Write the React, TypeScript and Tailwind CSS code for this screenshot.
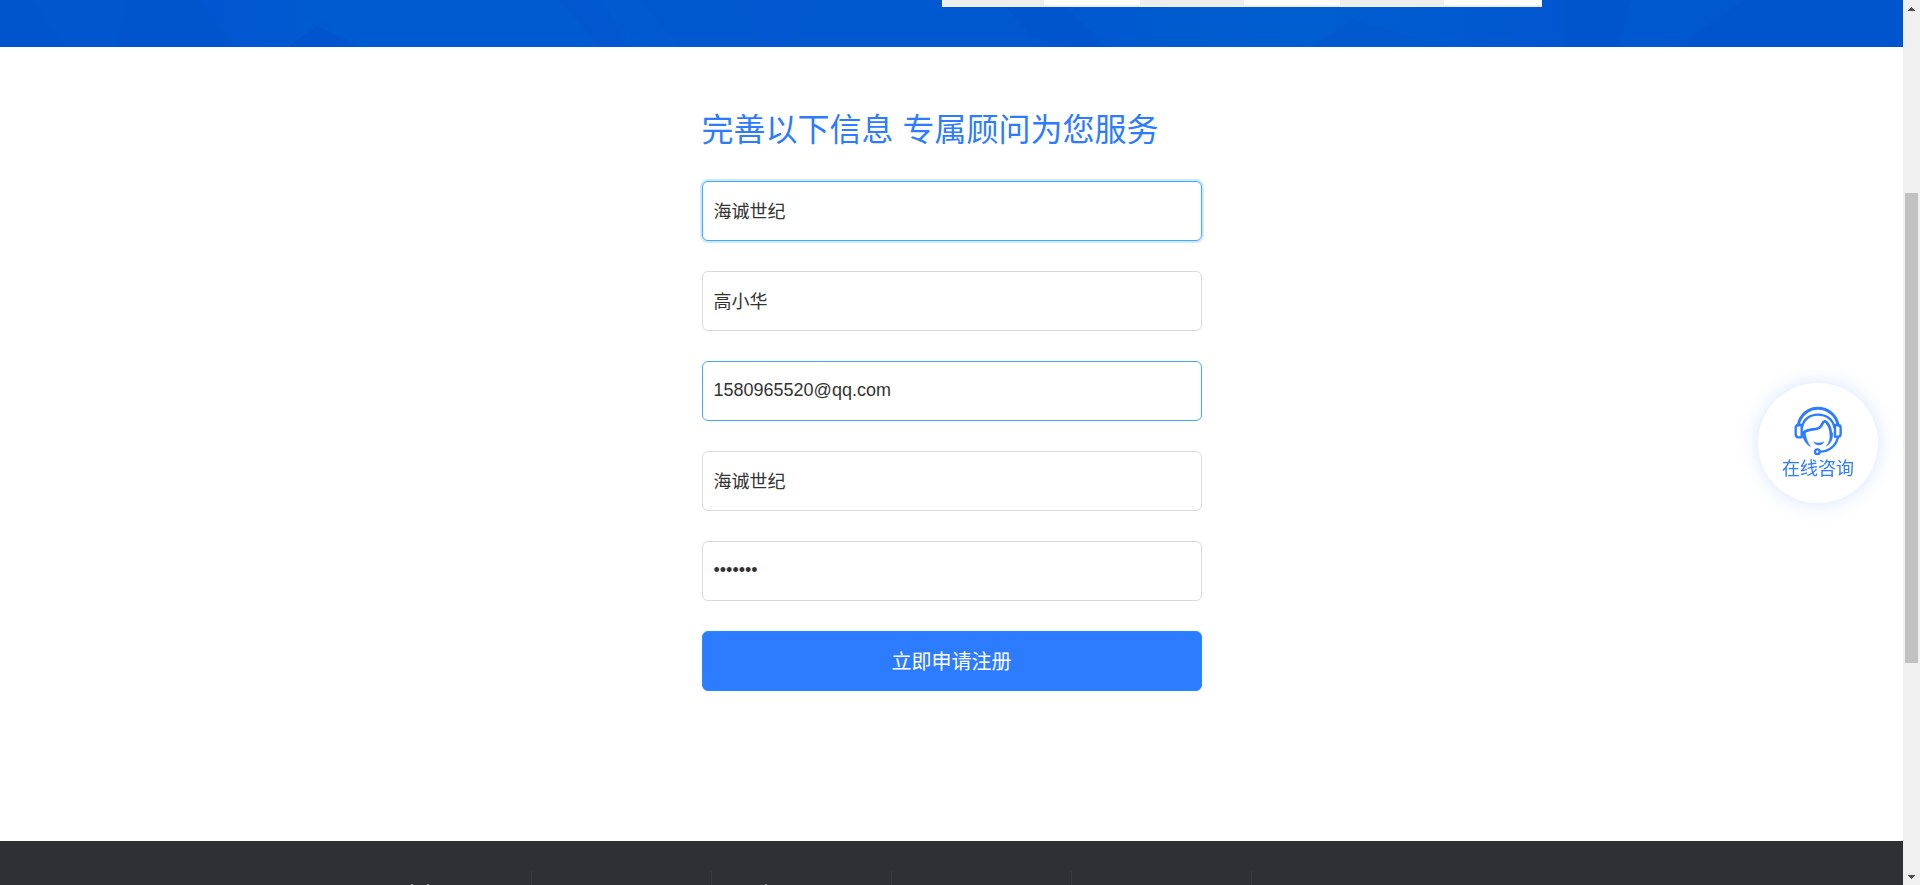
import React from "react";

type Field = {
  id: string;
  label: string;
  type: string;
  value: string;
  state: "idle" | "hover" | "focus";
};

const fields: Field[] = [
  { id: "company", label: "公司名称", type: "text", value: "海诚世纪", state: "focus" },
  { id: "contact", label: "联系人", type: "text", value: "高小华", state: "idle" },
  { id: "email", label: "邮箱", type: "email", value: "1580965520@qq.com", state: "hover" },
  { id: "account", label: "账号", type: "text", value: "海诚世纪", state: "idle" },
  { id: "password", label: "密码", type: "password", value: "1234567", state: "idle" },
];

const borders = {
  idle: "border-[#d9d9d9]",
  hover: "border-[#40a9ff]",
  focus: "border-[#40a9ff] shadow-[0_0_0_2px_rgba(24,144,255,0.2)]",
};

function Banner() {
  return (
    <header className="relative h-[47px] overflow-hidden bg-[#0055cd]">
      <svg
        className="absolute inset-0 h-full w-full"
        viewBox="0 0 1903 47"
        preserveAspectRatio="none"
        aria-hidden="true"
      >
        <defs>
          <linearGradient id="facetA" x1="0" x2="1">
            <stop offset="0" stopColor="#0055d0" />
            <stop offset="0.15" stopColor="#005bd0" />
            <stop offset="0.4" stopColor="#005ad0" />
            <stop offset="1" stopColor="#0057ce" />
          </linearGradient>
          <linearGradient id="facetB" x1="0" x2="1">
            <stop offset="0" stopColor="#0058ce" />
            <stop offset="0.5" stopColor="#005ed0" />
            <stop offset="1" stopColor="#0056cf" />
          </linearGradient>
        </defs>
        <path d="M32 0H127L114 47H67Z" fill="#0057cd" />
        <path d="M200 0H640L900 0L1070 47H236Z" fill="url(#facetA)" />
        <path d="M288 47L316 26L362 47Z" fill="#0054cd" />
        <path d="M560 0H600L630 47H600Z" fill="#0057d0" />
        <path d="M640 0H1000L1040 47H680Z" fill="#0058ce" />
        <path d="M740 0H810L790 47H765Z" fill="#0057d0" />
        <path d="M1060 0L1106 47H1563V0Z" fill="url(#facetB)" />
        <path d="M1320 7L1356 20L1445 47H1310L1354 20Z" fill="#005ace" />
        <path d="M1632 0H1744L1675 47H1618Z" fill="#0058cf" />
      </svg>
      <div className="relative mx-auto flex w-[1200px] justify-end">
        <div className="mr-[10px] grid h-[7px] w-[600px] grid-cols-[102px_96px_104px_96px_104px_98px] border-b border-[#eeeeee] bg-[#eeeeee] pb-px">
          <span />
          <span className="bg-white" />
          <span />
          <span className="bg-white" />
          <span />
          <span className="mr-px bg-white" />
        </div>
      </div>
    </header>
  );
}

function ServiceIcon() {
  return (
    <svg
      viewBox="160 123 150 150"
      className="size-[50px]"
      fill="none"
      stroke="#2d7bff"
      strokeLinecap="round"
      strokeLinejoin="round"
      aria-hidden="true"
    >
      <path d="M176 180C181 150 206 130 235 130S290 150 295 180" strokeWidth="9" />
      <path d="M187 187C191 163 210 149 235 149S280 163 284 187" strokeWidth="7" />
      <path d="M186 180V217H177Q168 217 168 207V189Q168 180 177 180Z" strokeWidth="7" />
      <path d="M286 180V215H294Q303 215 303 206V189Q303 180 294 180Z" strokeWidth="7" />
      <path d="M188 208C190 199 200 196 218 193C236 192 244 188 249 174Q253 166 260 171C268 180 273 192 274 207" strokeWidth="8" />
      <path d="M187 203C189 222 197 235 213 246C203 230 198 217 197 200ZM270 203C272 222 268 233 259 244C273 237 279 225 280 205Z" fill="#2d7bff" strokeWidth="1" />
      <path d="M222 231Q237 238 253 230Q248 240 237 240T222 231Z" fill="#2d7bff" strokeWidth="1" />
      <path d="M295 216C289 243 269 260 241 260" strokeWidth="7" />
      <circle cx="233" cy="260" r="7" strokeWidth="7" />
    </svg>
  );
}

function Scrollbar() {
  return (
    <div className="flex w-[17px] shrink-0 flex-col bg-[#f0f0f0]" aria-hidden="true">
      <div className="flex h-[17px] items-center justify-center">
        <svg viewBox="0 0 7 4" className="h-1 w-[7px]" fill="#505050" shapeRendering="crispEdges">
          <path d="M3 0h1v1h1v1h1v1h1v1H0V3h1V2h1V1h1z" />
        </svg>
      </div>
      <div className="flex flex-1 flex-col items-center">
        <div className="grow-[176]" />
        <div className="w-[13px] grow-[470] bg-[#c1c1c1]" />
        <div className="grow-[205]" />
      </div>
      <div className="flex h-[17px] items-center justify-center">
        <svg viewBox="0 0 7 4" className="h-1 w-[7px]" fill="#505050" shapeRendering="crispEdges">
          <path d="M0 0h7v1H6v1H5v1H4v1H3V3H2V2H1V1H0z" />
        </svg>
      </div>
    </div>
  );
}

function Footer() {
  return (
    <footer className="flex-1 bg-[#2f3034] pt-[30px]">
      <div className="mx-auto flex h-full w-[1200px]">
        <div className="flex w-[180px] items-end gap-[14px] border-r border-[#3a3b3f] pl-[59px]">
          <span className="h-px w-[2px] bg-[#8a8b8d]" />
          <span className="h-px w-[2px] bg-[#8a8b8d]" />
        </div>
        <div className="w-[180px] border-r border-[#3a3b3f]" />
        <div className="flex w-[180px] items-end border-r border-[#3a3b3f] pl-[53px]">
          <span className="h-px w-[2px] bg-[#8a8b8d]" />
        </div>
        <div className="w-[180px] border-r border-[#3a3b3f]" />
        <div className="w-[180px] border-r border-[#3a3b3f]" />
      </div>
    </footer>
  );
}

export default function App() {
  return (
    <div className="flex h-screen overflow-hidden bg-white font-['Liberation_Sans','Noto_Sans_CJK_SC',sans-serif]">
      <div className="flex min-w-0 flex-1 flex-col">
        <Banner />
        <main className="pt-[59px] pb-[150px]">
          <form className="mx-auto w-[500px]" onSubmit={(e) => e.preventDefault()}>
            <h1 className="mb-[27px] text-[32px] leading-[48px] font-normal text-[#2d7bff]">
              完善以下信息 专属顾问为您服务
            </h1>
            <div className="flex flex-col gap-[30px]">
              {fields.map((f) => (
                <input
                  key={f.id}
                  id={f.id}
                  aria-label={f.label}
                  type={f.type}
                  defaultValue={f.value}
                  className={`h-[60px] w-full rounded-[6px] border bg-white px-[11px] pb-[2px] text-lg text-[#333333] outline-none ${borders[f.state]}`}
                />
              ))}
              <button
                type="submit"
                className="h-[60px] w-full rounded-[6px] border border-[#1890ff] bg-[#2d7bff] pt-[2px] text-xl text-white"
              >
                立即申请注册
              </button>
            </div>
          </form>
        </main>
        <Footer />
      </div>
      <button
        type="button"
        className="fixed top-[383px] right-[42px] flex size-[120px] flex-col items-center rounded-full bg-white pt-[23px] text-lg leading-[26px] text-[#2d7bff] shadow-[0_0_20px_rgba(45,123,255,0.2)]"
      >
        <ServiceIcon />
        在线咨询
      </button>
      <Scrollbar />
    </div>
  );
}
